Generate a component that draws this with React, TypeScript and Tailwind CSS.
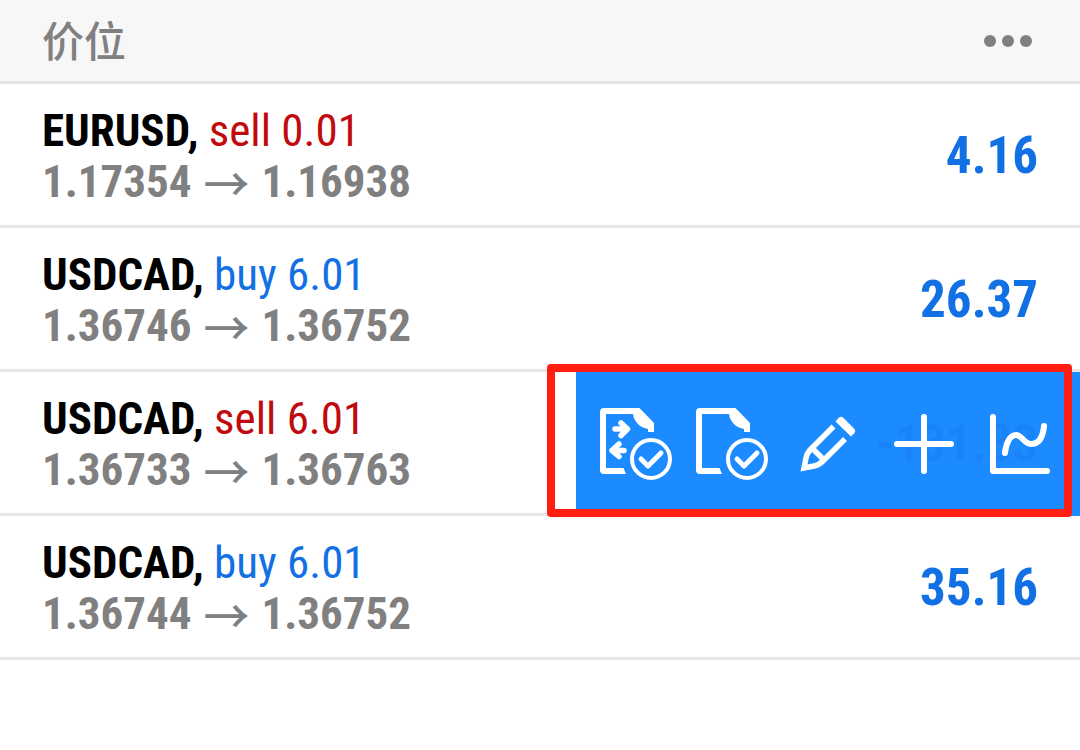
import { useState } from 'react';
import type { ReactNode } from 'react';

interface Position {
  id: number;
  symbol: string;
  side: 'buy' | 'sell';
  volume: string;
  open: string;
  current: string;
  profit: string;
}

const positions: Position[] = [
  { id: 1, symbol: 'EURUSD', side: 'sell', volume: '0.01', open: '1.17354', current: '1.16938', profit: '4.16' },
  { id: 2, symbol: 'USDCAD', side: 'buy', volume: '6.01', open: '1.36746', current: '1.36752', profit: '26.37' },
  { id: 3, symbol: 'USDCAD', side: 'sell', volume: '6.01', open: '1.36733', current: '1.36763', profit: '-131.83' },
  { id: 4, symbol: 'USDCAD', side: 'buy', volume: '6.01', open: '1.36744', current: '1.36752', profit: '35.16' },
];

function DocumentCheck() {
  return (
    <>
      <path
        stroke="none"
        fill="currentColor"
        d="M38 78H16Q12 78 12 74V16Q12 12 16 12H51.5L66 27V36H60V33C52 31.5 46 26 45 18H18V72H35.5Z"
      />
      <circle cx="63" cy="63" r="19" strokeWidth="4" />
      <path d="M53 63L60 70L73 57" strokeWidth="5" />
    </>
  );
}

function ActionButton({ label, children }: { label: string; children: ReactNode }) {
  return (
    <button type="button" aria-label={label} className="flex flex-1 items-center justify-center">
      <svg
        viewBox="0 0 96 96"
        className="size-24"
        fill="none"
        stroke="currentColor"
        strokeWidth="6"
        strokeLinecap="round"
        strokeLinejoin="round"
      >
        {children}
      </svg>
    </button>
  );
}

function SwipeActions() {
  return (
    <>
      <div className="absolute -bottom-[3px] right-0 top-0 flex w-[504px] bg-[#1587ff]/97 px-3 text-white">
        <ActionButton label="Close by">
          <g strokeWidth="5.5">
            <path d="M27 33H39M33 27L39.5 33L33 39.5" />
            <path d="M36 54.5H24M31 48L24 54.5L31 60.5" />
          </g>
          <DocumentCheck />
        </ActionButton>
        <ActionButton label="Close position">
          <DocumentCheck />
        </ActionButton>
        <ActionButton label="Modify position">
          <g strokeWidth="5.5" strokeLinecap="butt">
            <path d="M53.5 30.5L31 53Q27 57 26 62L24 72L34 70Q39 69 43 65L65 43" strokeLinejoin="miter" />
            <path d="M32 52L44 64" />
          </g>
          <path
            fill="currentColor"
            stroke="none"
            d="M55.5 25.5L59 21.5Q61 20 63 21.5L74.5 33Q76 35 74.5 37L71 40.5Z"
          />
        </ActionButton>
        <ActionButton label="New order">
          <path d="M48 21V75M21 48H75" />
        </ActionButton>
        <ActionButton label="Chart">
          <path d="M21 21V75H75" />
          <path d="M33 57C34 47 38 39 44 39C50 39 52 48 59 48C67 48 71 41 72 30" />
        </ActionButton>
      </div>
      <div className="pointer-events-none absolute -bottom-1 -top-2 right-2 w-[525px] rounded-[4px] border-8 border-[#ff1e0f]" />
    </>
  );
}

function PositionRow({ position, open, onToggle }: { position: Position; open: boolean; onToggle: () => void }) {
  const isLoss = position.profit.startsWith('-');

  return (
    <li
      onDoubleClick={onToggle}
      className="relative flex items-center justify-between border-b-[3px] border-[#e6e6e6] px-[42px] pb-[18px] pt-[21px]"
    >
      <div className="text-[45px] leading-[51px]">
        <p>
          <span className="font-bold text-black">{position.symbol},</span>{' '}
          <span className={position.side === 'buy' ? 'text-[#1170e4]' : 'text-[#c00a0d]'}>
            {position.side} {position.volume}
          </span>
        </p>
        <p className="flex items-center gap-3 font-bold text-[#808080]">
          <span>{position.open}</span>
          <span className="font-['Noto_Sans_CJK_SC',sans-serif] text-[46px] font-medium">→</span>
          <span>{position.current}</span>
        </p>
      </div>
      <span className={`text-[51px] font-bold leading-[60px] ${isLoss ? 'text-[#c00a0d]' : 'text-[#1170e4]'}`}>
        {position.profit}
      </span>
      {open && <SwipeActions />}
    </li>
  );
}

export default function App() {
  const [openId, setOpenId] = useState<number | null>(3);

  return (
    <main className="min-h-screen overflow-x-hidden bg-white font-['Roboto_Condensed','Liberation_Sans_Narrow','Noto_Sans_CJK_SC',sans-serif]">
      <header className="flex items-center justify-between border-b-[3px] border-[#e6e6e6] bg-[#f7f7f7] py-[10px] pl-[42px] pr-12">
        <h1 className="pb-1 font-['Noto_Sans_CJK_SC',sans-serif] text-[42px] font-medium leading-[57px] text-[#808080]">
          价位
        </h1>
        <button type="button" aria-label="More" className="flex gap-[6px]">
          <span className="size-3 rounded-full bg-[#808080]" />
          <span className="size-3 rounded-full bg-[#808080]" />
          <span className="size-3 rounded-full bg-[#808080]" />
        </button>
      </header>
      <ul>
        {positions.map(position => (
          <PositionRow
            key={position.id}
            position={position}
            open={openId === position.id}
            onToggle={() => setOpenId(openId === position.id ? null : position.id)}
          />
        ))}
      </ul>
    </main>
  );
}
